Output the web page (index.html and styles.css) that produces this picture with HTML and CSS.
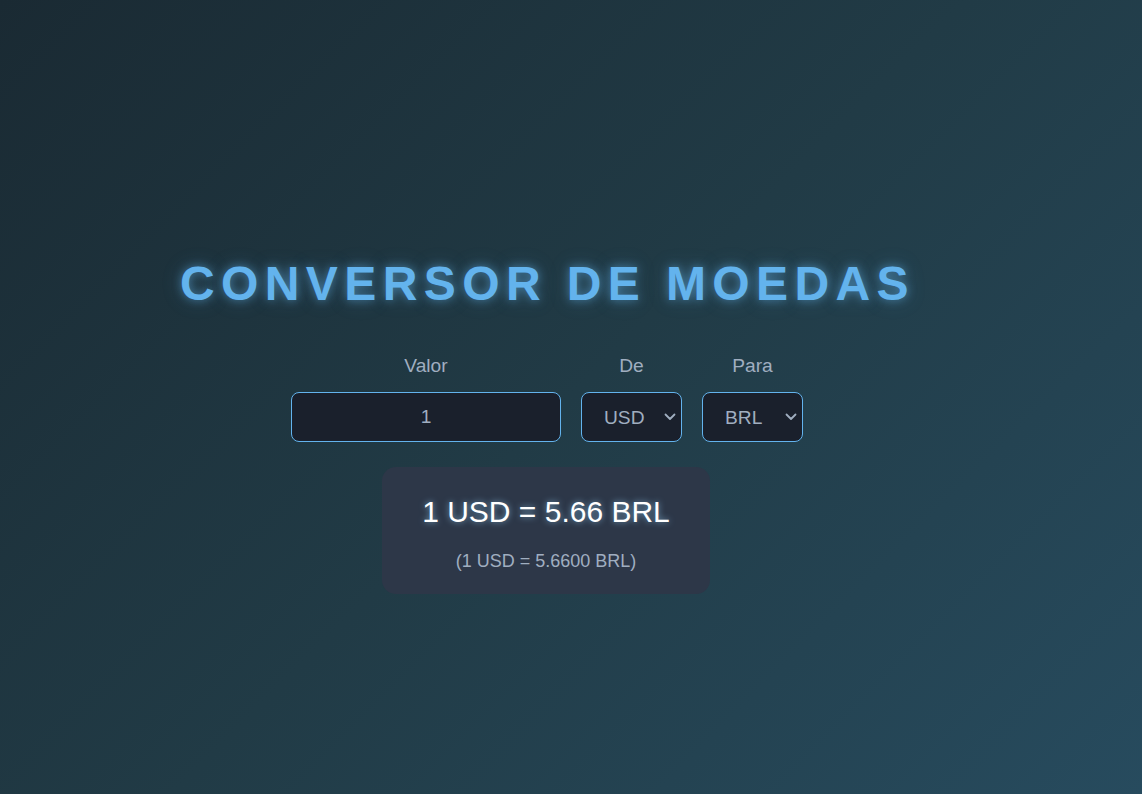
FILE: index.html
```html
<!DOCTYPE html>
<html lang="pt-BR">
<head>
<meta charset="utf-8">
<title>Conversor de Moedas</title>
<link rel="stylesheet" href="styles.css">
</head>
<body>
  <main class="app">
    <h1 class="title">CONVERSOR DE MOEDAS</h1>
    <div class="form-row">
      <div class="field">
        <label class="field-label" for="valor">Valor</label>
        <input class="amount" id="valor" type="text" value="1">
      </div>
      <div class="field">
        <label class="field-label" for="de">De</label>
        <select class="currency" id="de">
          <option selected>USD</option>
          <option>BRL</option>
          <option>EUR</option>
        </select>
      </div>
      <div class="field">
        <label class="field-label" for="para">Para</label>
        <select class="currency" id="para">
          <option>USD</option>
          <option selected>BRL</option>
          <option>EUR</option>
        </select>
      </div>
    </div>
    <div class="result">
      <div class="result-main">1 USD = 5.66 BRL</div>
      <div class="result-sub">(1 USD = 5.6600 BRL)</div>
    </div>
  </main>
</body>
</html>
```
FILE: styles.css
```css
html, body {
  margin: 0;
  padding: 0;
}

body {
  min-height: 794px;
  background: linear-gradient(135deg, #1a2a33 0%, #213b46 50%, #274b5e 100%);
  font-family: "Liberation Sans", Arial, sans-serif;
  color: #a0aec0;
}

.app {
  display: flex;
  flex-direction: column;
  align-items: center;
  padding: 256px 50px 0 0;
}

.title {
  margin: 0;
  font-size: 48px;
  line-height: 56px;
  font-weight: 700;
  letter-spacing: 6.4px;
  color: #63b3ed;
  text-shadow: 0 0 10px rgba(99, 179, 237, 0.55), 0 0 20px rgba(99, 179, 237, 0.25);
  padding-left: 3px;
}

.form-row {
  display: flex;
  gap: 20px;
  margin-top: 43px;
  margin-left: 2px;
}

.field {
  display: flex;
  flex-direction: column;
  align-items: center;
}

.field-label {
  font-size: 19.2px;
  line-height: 22px;
  color: #a0aec0;
  margin-bottom: 15px;
}

.amount,
.currency {
  box-sizing: border-box;
  height: 50px;
  border: 1px solid #63b3ed;
  border-radius: 8px;
  background-color: #1a202c;
  color: #a0aec0;
  font-family: "Liberation Sans", Arial, sans-serif;
  font-size: 19.2px;
  outline: none;
}

.amount {
  width: 270px;
  text-align: center;
  padding: 0 12px;
}

.currency {
  width: 101px;
  padding: 0 24px 0 22px;
  -webkit-appearance: none;
  appearance: none;
  background-image: url("data:image/svg+xml;utf8,<svg xmlns='http://www.w3.org/2000/svg' width='12' height='8' viewBox='0 0 12 8'><path d='M1.5 1.5 L6 6 L10.5 1.5' fill='none' stroke='%23a0aec0' stroke-width='1.8' stroke-linecap='round' stroke-linejoin='round'/></svg>");
  background-repeat: no-repeat;
  background-position: right 5px center;
  background-size: 12px 8px;
}

.result {
  margin-top: 25px;
  background: #2d3748;
  border-radius: 14px;
  padding: 28px 40px 22px;
  text-align: center;
}

.result-main {
  font-size: 30px;
  line-height: 34px;
  color: #ffffff;
  text-shadow: 0 0 6px rgba(144, 205, 244, 0.7);
  margin-bottom: 22px;
}

.result-sub {
  font-size: 18px;
  line-height: 21px;
  color: #a0aec0;
}
```
